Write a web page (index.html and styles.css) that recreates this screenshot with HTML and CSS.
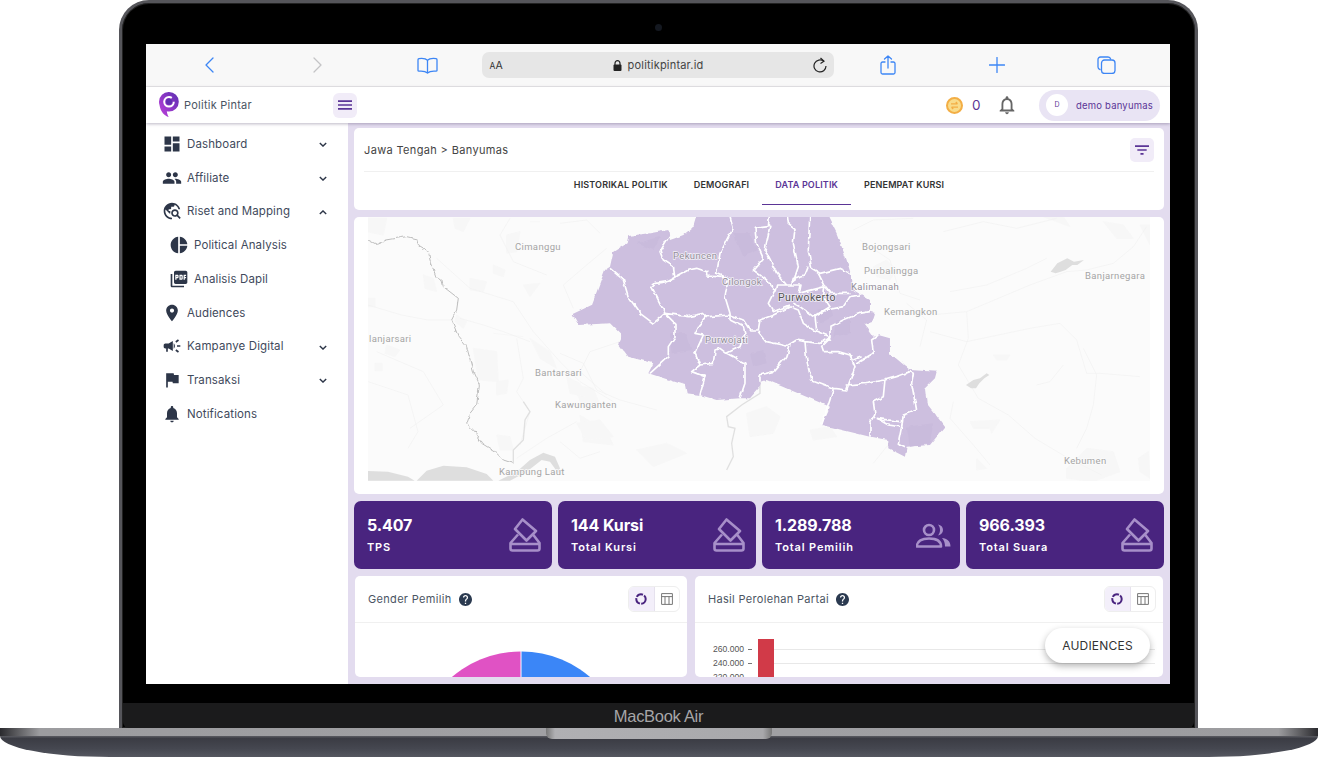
FILE: index.html
```html
<!DOCTYPE html>
<html lang="id">
<head>
<meta charset="utf-8">
<title>Politik Pintar</title>
<link rel="stylesheet" href="styles.css">
</head>
<body>
<div class="laptop">
  <div class="lid">
    <div class="lid-top"><span class="camera"></span></div>
    <div class="screen">
      <div class="safari">
        <span class="slot"><svg width="12" height="18" viewBox="0 0 12 18"><path d="M10 2 3 9l7 7" class="ic-blue"/></svg></span>
        <span class="slot"><svg width="12" height="18" viewBox="0 0 12 18"><path d="m2 2 7 7-7 7" class="ic-grey"/></svg></span>
        <span class="slot"><svg width="21" height="17" viewBox="0 0 21 17"><path d="M10.5 3.2C9 1.6 6 1.2 2 1.6 1.4 1.7 1 2.1 1 2.8v10.6c0 .5.4.8 1 .8 3.5-.3 6.5 0 8.5 1.8M10.5 3.2c1.5-1.6 4.5-2 8.5-1.6.6.1 1 .5 1 1.2v10.6c0 .5-.4.8-1 .8-3.5-.3-6.5 0-8.5 1.8zM10.5 3.2v12.6" class="ic-blue"/></svg></span>
        <div class="urlbar">
          <span class="aa"><small>A</small>A</span>
          <span class="url"><svg width="9" height="11" viewBox="0 0 9 11"><path d="M2 5V3.2a2.5 2.5 0 0 1 5 0V5" fill="none" stroke="#222" stroke-width="1.2"/><rect x=".5" y="4.5" width="8" height="6.5" rx="1" fill="#222"/></svg>politikpintar.id</span>
          <svg width="14" height="16" viewBox="0 0 14 16"><path d="M10.8 4.3A6 6 0 1 0 13 9" fill="none" stroke="#222" stroke-width="1.2"/><path d="M7.5 1 11 4.2 7.5 6.5" fill="none" stroke="#222" stroke-width="1.2"/></svg>
        </div>
        <span class="slot"><svg width="16" height="20" viewBox="0 0 16 20"><path d="M5 7H2.500C1.700 7 1 7.700 1 8.500v9c0 .8.7 1.500 1.500 1.500h11c.8 0 1.500-.7 1.500-1.500v-9c0-.8-.7-1.500-1.500-1.500H11M8 13V1M4.500 4 8 1l3.500 3" class="ic-blue"/></svg></span>
        <span class="slot"><svg width="16" height="16" viewBox="0 0 16 16"><path d="M8 .5v15M.5 8h15" class="ic-blue"/></svg></span>
        <span class="slot"><svg width="19" height="18" viewBox="0 0 19 18"><path d="M3 13.5C1.7 13.2 1 12.4 1 11V3.500C1 2 2 1 3.500 1H11c1.400 0 2.300.7 2.600 2" class="ic-blue"/><rect x="4.500" y="4" width="13.500" height="13.500" rx="3" class="ic-blue"/></svg></span>
      </div>

      <header class="appbar">
        <div class="brand">
          <svg width="20" height="26" viewBox="0 0 20 26"><defs><linearGradient id="lg" x1="0" y1="1" x2="1" y2="0"><stop offset="0" stop-color="#c040dc"/><stop offset="1" stop-color="#5a2fb0"/></linearGradient></defs><path d="M10 0a9.800 9.800 0 0 1 0 19.600c-.8 0-1.500-.1-2.200-.3.2 2.200.9 4 1.900 5.700C5.500 23.800 1.600 20 .5 13 .1 11.900 0 10.900 0 9.800A9.800 9.800 0 0 1 10 0z" fill="url(#lg)"/><circle cx="10" cy="9.800" r="4.800" fill="none" stroke="#fff" stroke-width="2" stroke-dasharray="25 5"/><circle cx="10" cy="9.800" r="3" fill="#5f2fb0"/></svg>
          <span>Politik Pintar</span>
        </div>
        <button class="menu-btn"><svg width="14" height="14" viewBox="3 3 18 18"><path d="M3 18h18v-2H3v2zm0-5h18v-2H3v2zm0-7v2h18V6H3z" fill="#5b3596"/></svg></button>
        <div class="appbar-right">
          <svg class="coin" width="17" height="17" viewBox="0 0 17 17"><circle cx="8.500" cy="8.500" r="7.500" fill="#f9dc8a" stroke="#f3ae45" stroke-width="2"/><path d="M5 6.800h6.500M9.800 5l1.700 1.800M12 10.200H5.500M7.200 12l-1.700-1.800" fill="none" stroke="#f3ae45" stroke-width="1.300"/></svg>
          <span class="balance">0</span>
          <svg class="bell" width="22" height="22" viewBox="0 0 24 24"><path d="M12 22c1.100 0 2-.9 2-2h-4c0 1.100.9 2 2 2zm6-6v-5c0-3.070-1.630-5.640-4.500-6.320V4c0-.83-.67-1.500-1.500-1.500s-1.500.67-1.500 1.500v.68C7.640 5.360 6 7.920 6 11v5l-2 2v1h16v-1l-2-2zm-2 1H8v-6c0-2.480 1.510-4.500 4-4.500s4 2.020 4 4.500v6z" fill="#666"/></svg>
          <div class="user"><span class="avatar">D</span><span class="uname">demo banyumas</span></div>
        </div>
      </header>

      <div class="body">
        <nav class="sidebar">
          <a class="nav"><svg class="ni" viewBox="0 0 24 24"><path d="M3 13h8V3H3v10zm0 8h8v-6H3v6zm10 0h8V11h-8v10zm0-18v6h8V3h-8z"/></svg><span>Dashboard</span><svg class="chev" viewBox="0 0 10 6"><path d="m1 1 4 4 4-4"/></svg></a>
          <a class="nav"><svg class="ni" viewBox="0 0 24 24"><path d="M16 11c1.660 0 2.990-1.340 2.990-3S17.660 5 16 5c-1.660 0-3 1.340-3 3s1.340 3 3 3zm-8 0c1.660 0 2.990-1.340 2.990-3S9.660 5 8 5C6.340 5 5 6.340 5 8s1.340 3 3 3zm0 2c-2.330 0-7 1.170-7 3.500V19h14v-2.500c0-2.330-4.670-3.500-7-3.500zm8 0c-.29 0-.62.02-.97.05 1.160.84 1.970 1.970 1.970 3.450V19h6v-2.500c0-2.330-4.670-3.500-7-3.500z"/></svg><span>Affiliate</span><svg class="chev" viewBox="0 0 10 6"><path d="m1 1 4 4 4-4"/></svg></a>
          <a class="nav"><svg class="ni" viewBox="0 0 24 24"><path d="M19.300 16.900c.4-.7.7-1.500.7-2.400 0-2.500-2-4.500-4.500-4.500S11 12 11 14.500s2 4.500 4.500 4.500c.9 0 1.700-.3 2.400-.7l3.200 3.200 1.400-1.400-3.200-3.200zm-3.800.1c-1.400 0-2.500-1.100-2.500-2.500s1.100-2.500 2.500-2.500 2.500 1.100 2.500 2.500-1.100 2.500-2.500 2.500zM12 20v2C6.480 22 2 17.520 2 12S6.480 2 12 2c4.840 0 8.870 3.440 9.800 8h-2.070c-.64-2.460-2.400-4.470-4.730-5.410V5c0 1.100-.9 2-2 2h-2v2c0 .55-.45 1-1 1H8v2h2v3H9l-4.790-4.790C4.080 10.790 4 11.380 4 12c0 4.410 3.590 8 8 8z"/></svg><span>Riset and Mapping</span><svg class="chev" viewBox="0 0 10 6"><path d="m1 5 4-4 4 4"/></svg></a>
          <a class="nav sub"><svg class="ni" viewBox="0 0 24 24"><path d="M11 2v20c-5.070-.5-9-4.790-9-10s3.930-9.500 9-10zm2.030 0v8.990H22c-.47-4.740-4.240-8.520-8.970-8.990zm0 11.010V22c4.740-.47 8.500-4.250 8.970-8.990h-8.970z"/></svg><span>Political Analysis</span></a>
          <a class="nav sub"><svg class="ni" viewBox="0 0 24 24"><path d="M20 2H8c-1.100 0-2 .9-2 2v12c0 1.100.9 2 2 2h12c1.100 0 2-.9 2-2V4c0-1.100-.9-2-2-2zm-8.500 7.500c0 .83-.67 1.500-1.500 1.500H9v2H7.500V7H10c.83 0 1.500.67 1.500 1.500v1zm5 2c0 .83-.67 1.500-1.500 1.500h-2.500V7H15c.83 0 1.500.67 1.500 1.500v3zm4-3H19v1h1.500V11H19v2h-1.500V7h3v1.500zM9 9.500h1v-1H9v1zM4 6H2v14c0 1.100.9 2 2 2h14v-2H4V6zm10 5.500h1v-3h-1v3z"/></svg><span>Analisis Dapil</span></a>
          <a class="nav"><svg class="ni" viewBox="0 0 24 24"><path d="M12 2C8.130 2 5 5.130 5 9c0 5.250 7 13 7 13s7-7.750 7-13c0-3.870-3.130-7-7-7zm0 9.500c-1.380 0-2.500-1.120-2.500-2.500s1.120-2.500 2.500-2.500 2.500 1.120 2.500 2.500-1.120 2.500-2.500 2.500z"/></svg><span>Audiences</span></a>
          <a class="nav"><svg class="ni" viewBox="0 0 24 24"><path d="M18 11v2h4v-2h-4zm-2 6.610c.96.71 2.210 1.650 3.200 2.390.4-.53.8-1.070 1.200-1.600-.99-.74-2.240-1.680-3.200-2.400-.4.54-.8 1.080-1.200 1.610zM20.400 5.600c-.4-.53-.8-1.070-1.200-1.600-.99.74-2.240 1.680-3.200 2.400.4.53.8 1.070 1.200 1.600.96-.72 2.210-1.650 3.200-2.400zM4 9c-1.100 0-2 .9-2 2v2c0 1.100.9 2 2 2h1v4h2v-4h1l5 3V6L8 9H4zm11.500 3c0-1.330-.58-2.530-1.500-3.350v6.690c.92-.81 1.500-2.010 1.500-3.340z"/></svg><span>Kampanye Digital</span><svg class="chev" viewBox="0 0 10 6"><path d="m1 1 4 4 4-4"/></svg></a>
          <a class="nav"><svg class="ni" viewBox="0 0 24 24"><path d="M14.400 6 14 4H5v17h2v-7h5.600l.4 2h7V6z"/></svg><span>Transaksi</span><svg class="chev" viewBox="0 0 10 6"><path d="m1 1 4 4 4-4"/></svg></a>
          <a class="nav"><svg class="ni" viewBox="0 0 24 24"><path d="M12 22c1.100 0 2-.9 2-2h-4c0 1.100.89 2 2 2zm6-6v-5c0-3.070-1.640-5.640-4.500-6.320V4c0-.83-.67-1.500-1.500-1.500s-1.500.67-1.500 1.500v.68C7.630 5.360 6 7.920 6 11v5l-2 2v1h16v-1l-2-2z"/></svg><span>Notifications</span></a>
        </nav>

        <main class="main">
          <section class="card head-card">
            <div class="crumb-row">
              <span class="crumb">Jawa Tengah &gt; Banyumas</span>
              <button class="filter-btn"><svg width="14" height="14" viewBox="3 3 18 18"><path d="M10 18h4v-2h-4v2zM3 6v2h18V6H3zm3 7h12v-2H6v2z" fill="#5b3596"/></svg></button>
            </div>
            <div class="tabs">
              <a class="tab">HISTORIKAL POLITIK</a>
              <a class="tab">DEMOGRAFI</a>
              <a class="tab active">DATA POLITIK</a>
              <a class="tab">PENEMPAT KURSI</a>
            </div>
          </section>

          <section class="card map-card">
            <svg class="map" width="782" height="264" viewBox="0 0 782 264">
              <defs>
                <filter id="rough" x="-5%" y="-5%" width="110%" height="110%"><feTurbulence type="fractalNoise" baseFrequency=".045" numOctaves="2" seed="4"/><feDisplacementMap in="SourceGraphic" scale="12" xChannelSelector="R" yChannelSelector="G"/></filter>
                <filter id="jag" x="-5%" y="-5%" width="110%" height="110%"><feTurbulence type="fractalNoise" baseFrequency=".16" numOctaves="2" seed="9"/><feDisplacementMap in="SourceGraphic" scale="4" xChannelSelector="R" yChannelSelector="G"/></filter>
              </defs>
              <rect width="782" height="264" fill="#fbfbfb"/>
              <g class="blobs" transform="translate(-8 -2) scale(.3333)">
                <path d="M340 400l70 10 5 90-60-5zM330 190l50 10-10 30-40-5zM400 150l35 15-5 20-30-10zM490 210l50-5-30 40zM510 370l60 40 20 50-50-30zM640 510l60 10 20 50-50 10zM660 600l80 50 20 40-90-10zM410 500l35-5-5 40-30 5zM190 180l30 10 10 40-35-10zM290 300l30 20-10 20-25-20zM410 660l40 5 10 40-40 0zM20 250h25v25H20zM45 445h22v22H45zM80 390l40 15-15 20-30-10zM440 60l40-10-10 60-30 5zM280 10l50 0-20 40-25-10zM20 10l60 0-10 50-50-10z"/>
                <path d="M400 355l90 10M510 20l30 0"/>
              </g>
              <g class="blobs" transform="translate(192 -7) scale(.3333)">
                <path d="M560 610l60-20 40 30-20 50-70 10zM750 660l60-10 20 30-70 10zM230 720l90-20 60 30-100 40zM940 170l40-20 30 30-20 30-40-10zM50 640l70-10 40 50-80 10zM20 500l40 20 20 40-50-10z"/>
              </g>
              <g class="blobs" transform="translate(562 -2) scale(.3333)">
                <path d="M410 760l60-60 80 10 20 60-80 30-80-10zM625 730l30-20 5 80-30-20zM190 420h50l-10 15h-30zM120 620l90-5-25 40-5-15-50 0zM340 5h60l20 30zM520 20l60 10 30 40-50 0zM630 30h30v60zM140 730l30 30-30 5z"/>
              </g>
              <g class="roads" transform="translate(-8 -2) scale(.3333)">
                <path d="M230 130l100 90 130 40 60 90 80 90 60 60 100 60M470 370l20 120-20 40 40 60-30 100M510 380l-80-30-60-20-70-20M24 270l100 30 80 15 70 0M150 640l100-70-60-100-140-60M650 620l-90 50-90 60M740 540l-80-70 30-60 90-30M560 180l-100-40-40-80 30-50M640 280l-30-70 70-60 60-50M24 500l120 40 30 110 -30 50M600 680l60 50 60-20"/>
              </g>
              <g class="roads" transform="translate(562 -2) scale(.3333)">
                <path d="M0 300l110-10 190-80 110-40 60-5 80-20 60-50 40-60M0 350l110 30 190-40 90-15 50 50 30 100 40 0 120 10M110 290l5 80-30 80 60 100 90 50 80 70 100 60 100 50M460 400l40 80-10 90-20 70-30 60M70 560l-10 50 70 80 50 60M320 510l40-10 40-50M40 50l120-30 100 20 120-30M60 230l110-20 120-50 60-30"/>
              </g>
              <g class="roads" transform="translate(192 -7) scale(.3333)">
                <path d="M0 40l80-10 40 40M880 60l60-30 120-5M900 90l90 60 30 100 60 20M1040 280l60 50-20 80M0 430l70 30 40 80 70 30 110 30M940 760l40-50 80-40"/>
              </g>
              <path class="river" transform="translate(-8 -2) scale(.3333)" d="M460 745 460 705 490 675 495 615 510 590 490 560"/>
              <path class="river" transform="translate(192 -7) scale(.3333)" d="M600 515 600 550 545 585 500 620 505 650 525 655 515 700 520 740 500 780"/>
              <g class="water" transform="translate(-8 -2) scale(.3333)">
                <path d="M24 768 84 770 144 785 164 797H24zM170 797 200 767 250 752 320 757 380 777 400 797zM415 797 470 770 510 735 550 713 585 725 600 760 595 775 570 740 545 735 500 770 450 797z"/>
              </g>
              <g class="water" transform="translate(562 -2) scale(.3333)">
                <path d="M362 170l20-25 30-15 20 10 30-5-20 15-15 0-20 15-15 5-15 5zM108 510l22-15 20-5 20-15 8 5-15 10-15 15-10 15-15 0z"/>
              </g>
              <g filter="url(#jag)">
                <path class="border-line" transform="translate(-8 -2) scale(.3333)" d="M24 75 50 88 80 75 140 65 170 72 175 92 205 110 210 135 228 185 245 195 250 215 295 250 290 285 275 315 295 365 320 395 340 470 358 510 350 570 330 595 320 625 345 650 365 685 405 710 430 735 460 745"/>
              </g>
              <g transform="translate(192 -7) scale(.3333)">
                <g filter="url(#rough)">
                  <path class="region" d="M38 312 95 285 135 180 150 170 160 125 200 100 205 78 270 70 325 60 330 90 345 85 370 75 400 50 415 0H795L830 70 860 150 875 200 880 240 930 270 930 305 945 310 935 340 915 345 940 380 955 375 990 385 990 430 1050 480 1130 485 1125 505 1095 535 1100 580 1155 650 1110 705 1040 710 1035 740 985 715 985 690 930 680 785 645 810 590 620 510 605 515 600 530 570 565 540 565 470 570 420 555 380 550 375 525 265 490 280 460 205 440 175 400 185 375 150 340 55 345Z"/>
                  <path class="shade" d="M330 370l50 0 15 50-60 10zM230 100l70-20-20 40zM520 70l50 0 20 50-40 20zM1040 650l80-10-10 60-60 10zM830 330l40 0 0 40-50 10zM770 300l40-10 10 30-40 20zM570 430l40-10 10 40-40 10z"/>
                  <path class="bound" d="M150 175 190 210 205 260 240 310 280 340 315 310M328 78 300 125 310 150 340 170 345 205 320 215 285 220 275 230 290 260 315 310 345 340 345 380 325 410 325 440 270 490M320 215 385 180 410 175 440 185 440 198 470 200 505 205M505 0 520 55 480 130 470 190 505 205 495 260 510 310 510 330M315 310 385 320 430 310 440 320 510 315 550 330 570 360 595 360 600 330 640 315 690 290M440 320 415 350 405 370 430 375 405 430 420 465 395 485 435 500 420 555M510 330 550 350 555 370 540 410 500 430 480 415 465 420 460 460 420 465M500 430 555 460 555 520 540 565M595 365 620 395 680 408 710 390 735 395 780 400 810 380 760 360 730 340 715 300 690 290M690 408 680 440 640 485 600 495 600 515M735 395 740 450 755 510 820 535 860 540 885 470 870 435 835 425 790 425 785 410 810 385M820 535 785 645M860 525 920 520 975 510 1010 500 1050 485 1060 490 1055 520 1070 600 1030 615 1025 650 1015 700 1035 710M975 510 970 560 940 575 945 610 930 640 930 680M950 625 1020 635M950 625 985 645 1020 650M890 460 940 430 935 390 955 375M880 450 905 440M785 410 810 380 810 350 850 330 900 310 930 305M770 360 765 320 800 300 850 290 870 260 900 255M585 55 625 50 630 0M585 55 590 100 610 145 580 180 620 210 645 240 625 280 640 305 690 285M630 50 615 120 650 190 680 225M680 0 685 40 705 55 700 100 715 170 700 215M750 0 745 120 755 175 780 190 840 175 870 190M745 170 735 195 700 205 695 225 650 225 645 245M660 225 720 225 715 250 795 230 790 260 810 290 760 320 720 290 700 280M775 190 795 230 810 250 870 250"/>
                </g>
              </g>
              <text class="lbl" x="147" y="33">Cimanggu</text>
              <text class="lbl halo" x="305" y="42">Pekuncen</text>
              <text class="lbl halo" x="354" y="68">Cilongok</text>
              <text class="lbl big" x="410" y="84">Purwokerto</text>
              <text class="lbl halo" x="337" y="126">Purwojati</text>
              <text class="lbl" x="494" y="33">Bojongsari</text>
              <text class="lbl" x="496" y="57">Purbalingga</text>
              <text class="lbl halo" x="483" y="73">Kalimanah</text>
              <text class="lbl" x="516" y="98">Kemangkon</text>
              <text class="lbl" x="717" y="62">Banjarnegara</text>
              <text class="lbl" x="1" y="125">lanjarsari</text>
              <text class="lbl" x="167" y="159">Bantarsari</text>
              <text class="lbl" x="187" y="191">Kawunganten</text>
              <text class="lbl" x="131" y="258">Kampung Laut</text>
              <text class="lbl" x="696" y="247">Kebumen</text>
            </svg>
          </section>

          <section class="stats">
            <div class="stat"><div><b>5.407</b><span>TPS</span></div><svg class="s-ic" width="32" height="34" viewBox="0 0 32 34"><path d="M13.500 1.500 27 13l-9.500 9.500L6 11zM9 16.500 1.500 25v5.500c0 1.200.8 2 2 2h25c1.200 0 2-.8 2-2V25L24 16.500M1.500 26H30.500"/></svg></div>
            <div class="stat"><div><b>144 Kursi</b><span>Total Kursi</span></div><svg class="s-ic" width="32" height="34" viewBox="0 0 32 34"><path d="M13.500 1.500 27 13l-9.500 9.500L6 11zM9 16.500 1.500 25v5.500c0 1.200.8 2 2 2h25c1.200 0 2-.8 2-2V25L24 16.500M1.500 26H30.500"/></svg></div>
            <div class="stat"><div><b>1.289.788</b><span>Total Pemilih</span></div><svg class="s-ic users" width="35" height="25" viewBox="0 0 35 25"><circle cx="13" cy="7" r="5"/><path d="M1 23.500c0-5.500 5-8 12-8s12 2.500 12 8z"/><path class="fillp" d="M22 1.500c3 .4 5 2.700 5 5.500s-2 5-5 5.500c1.300-1.500 2-3.400 2-5.500s-.7-4-2-5.500zM26 15c5 .6 8.500 3 8.500 8.500H29c0-3.600-1-6.500-3-8.500z"/></svg></div>
            <div class="stat"><div><b>966.393</b><span>Total Suara</span></div><svg class="s-ic" width="32" height="34" viewBox="0 0 32 34"><path d="M13.500 1.500 27 13l-9.500 9.500L6 11zM9 16.500 1.500 25v5.500c0 1.200.8 2 2 2h25c1.200 0 2-.8 2-2V25L24 16.500M1.500 26H30.500"/></svg></div>
          </section>

          <section class="charts">
            <div class="card chart gender">
              <div class="chart-head">
                <span class="chart-title">Gender Pemilih</span>
                <svg class="help" width="13" height="13" viewBox="2 2 20 20"><path d="M12 2C6.480 2 2 6.480 2 12s4.480 10 10 10 10-4.480 10-10S17.520 2 12 2zm1 17h-2v-2h2v2zm2.070-7.750-.9.92C13.450 12.900 13 13.500 13 15h-2v-.5c0-1.100.45-2.100 1.170-2.830l1.240-1.260c.37-.36.59-.86.59-1.410 0-1.100-.9-2-2-2s-2 .9-2 2H8c0-2.210 1.790-4 4-4s4 1.790 4 4c0 .88-.36 1.680-.93 2.250z" fill="#2b3a50"/></svg>
                <div class="toggle"><span class="on"><svg width="12" height="12" viewBox="0 0 12 12"><circle cx="6" cy="6" r="4.700" fill="none" stroke="#49247f" stroke-width="2" stroke-dasharray="7 1.300"/></svg></span><span><svg width="12" height="12" viewBox="0 0 12 12"><path d="M.6.600h10.800v10.800H.6zM.6 3.600h10.800M4 3.600v7.800M8 3.600v7.800" fill="none" stroke="#777" stroke-width="1"/></svg></span></div>
              </div>
              <svg class="pie" width="332" height="54" viewBox="0 0 332 54"><path d="M165.500 28.500A105 105 0 0 0 60.500 133.500H165.500z" fill="#e052c4"/><path d="M166.500 28.500A105 105 0 0 1 271.500 133.500H166.500z" fill="#3b86f7"/></svg>
            </div>
            <div class="card chart parties">
              <div class="chart-head">
                <span class="chart-title">Hasil Perolehan Partai</span>
                <svg class="help" width="13" height="13" viewBox="2 2 20 20"><path d="M12 2C6.480 2 2 6.480 2 12s4.480 10 10 10 10-4.480 10-10S17.520 2 12 2zm1 17h-2v-2h2v2zm2.070-7.750-.9.92C13.450 12.900 13 13.500 13 15h-2v-.5c0-1.100.45-2.100 1.170-2.830l1.240-1.260c.37-.36.59-.86.59-1.410 0-1.100-.9-2-2-2s-2 .9-2 2H8c0-2.210 1.790-4 4-4s4 1.790 4 4c0 .88-.36 1.680-.93 2.250z" fill="#2b3a50"/></svg>
                <div class="toggle"><span class="on"><svg width="12" height="12" viewBox="0 0 12 12"><circle cx="6" cy="6" r="4.700" fill="none" stroke="#49247f" stroke-width="2" stroke-dasharray="7 1.300"/></svg></span><span><svg width="12" height="12" viewBox="0 0 12 12"><path d="M.6.600h10.800v10.800H.6zM.6 3.600h10.800M4 3.600v7.800M8 3.600v7.800" fill="none" stroke="#777" stroke-width="1"/></svg></span></div>
              </div>
              <svg class="bars" width="468" height="54" viewBox="0 0 468 54">
                <path d="M79 26.500H460M79 40.500H460" stroke="#e8e8e8"/>
                <path d="M53 26.500h4M53 40.500h4M53 54.500h4" stroke="#777"/>
                <rect x="63" y="16" width="16" height="40" fill="#d13a48"/>
                <text class="tick" x="49" y="29">260.000</text>
                <text class="tick" x="49" y="43">240.000</text>
                <text class="tick" x="49" y="57">220.000</text>
              </svg>
            </div>
          </section>
        </main>
      </div>
      <button class="fab">AUDIENCES</button>
    </div>
    <div class="chin"></div>
    <div class="hinge-strip">MacBook Air</div>
  </div>
  <div class="base">
    <div class="base-top"><span class="notch"></span></div>
    <div class="base-bottom"></div>
  </div>
</div>
</body>
</html>
```

FILE: styles.css
```css
* { box-sizing: border-box; }
html, body { margin: 0; padding: 0; }
body { width: 1318px; height: 757px; overflow: hidden; background: #fff; font-family: Inter, "Noto Sans", sans-serif; color: #374151; }
a { display: flex; }
button { border: 0; padding: 0; font: inherit; cursor: pointer; }

.laptop { display: flex; flex-direction: column; width: 1318px; height: 757px; }
.lid { width: 1079px; height: 728px; flex: none; margin-left: 119px; padding: 0 24px; background: #000; border: 3px solid #55555a; border-bottom: 0; border-radius: 30px 30px 0 0; display: flex; flex-direction: column; align-items: flex-start; box-shadow: inset 0 0 0 1px #222; }
.lid-top { height: 41px; width: 100%; display: flex; justify-content: center; align-items: center; padding-top: 8px; flex: none; }
.camera { width: 7px; height: 7px; border-radius: 50%; background: #141820; }
.screen { position: relative; width: 1024px; height: 640px; flex: none; display: flex; flex-direction: column; background: #e3dcef; overflow: hidden; }
.chin { height: 19px; flex: none; }
.hinge-strip { height: 25px; margin: 0 -23px; align-self: stretch; flex: none; background: #1b1b1c; color: #a6a6a8; font: 16.500px/26px "Liberation Sans", sans-serif; letter-spacing: -.3px; text-align: center; border-radius: 0 0 6px 6px; }

.base { flex: none; height: 29px; display: flex; flex-direction: column; }
.base-top { height: 8px; flex: none; display: flex; justify-content: center; background: linear-gradient(90deg, #2a2a2e 0, #9c9c9f 3%, #a0a0a3 40%, #a0a0a3 60%, #9c9c9f 97%, #2a2a2e 100%); }
.notch { width: 226px; height: 11px; flex: none; background: linear-gradient(90deg, #777 0, #b0b0b3 4%, #a8a8ab 96%, #777 100%); border-radius: 0 0 6px 6px; position: relative; z-index: 1; }
.base-bottom { height: 21px; flex: none; background: linear-gradient(180deg, #5b5c62 0, #3b3c44 12%, #454750 60%, #555760 100%); border-radius: 0 0 110px 110px / 0 0 21px 21px; }

.safari { height: 43px; flex: none; display: flex; align-items: center; padding-left: 8.500px; background: #f8f8f8; border-bottom: 1px solid #e8e8e8; }
.slot { width: 109px; flex: none; display: flex; justify-content: center; align-items: center; }
.ic-blue { fill: none; stroke: #3d86f5; stroke-width: 1.300; stroke-linecap: round; stroke-linejoin: round; }
.ic-grey { fill: none; stroke: #c4c4c6; stroke-width: 1.300; stroke-linecap: round; stroke-linejoin: round; }
.urlbar { width: 352px; height: 26px; flex: none; display: flex; align-items: center; justify-content: space-between; padding: 0 6px 0 8px; background: #e6e6e6; border-radius: 7px; color: #333; }
.aa { font-size: 10.500px; width: 60px; }
.aa small { font-size: 8.500px; }
.url { display: flex; align-items: center; gap: 6px; font-size: 11px; letter-spacing: .2px; color: #444; margin-right: 47px; }

.appbar { height: 36px; flex: none; display: flex; align-items: center; padding: 0 10px 0 13px; background: #fff; box-shadow: 0 1px 3px rgba(60,50,90,.35); position: relative; z-index: 2; }
.brand { display: flex; align-items: center; gap: 5px; width: 174px; font-size: 11px; letter-spacing: .25px; color: #4b5563; }
.menu-btn { width: 24px; height: 25px; background: #f1ecf8; border-radius: 6px; display: flex; align-items: center; justify-content: center; }
.appbar-right { margin-left: auto; display: flex; align-items: center; }
.coin { flex: none; }
.balance { margin-left: 9px; width: 18px; font-size: 13.500px; color: #5b3596; }
.bell { margin-left: 6px; }
.user { margin-left: 21px; width: 121px; height: 31px; display: flex; align-items: center; padding-left: 7px; background: #e9e4f4; border-radius: 16px; }
.avatar { width: 22px; height: 22px; flex: none; border-radius: 50%; background: #fff; color: #5b3596; font-size: 7px; line-height: 22px; text-align: center; }
.uname { margin-left: 8px; font-size: 9.500px; letter-spacing: .2px; color: #5b3596; white-space: nowrap; }

.body { flex: 1; min-height: 0; display: flex; }
.sidebar { width: 202px; flex: none; background: #fff; padding-top: 4px; }
.nav { height: 33.750px; align-items: center; padding-left: 15.500px; font-size: 11.500px; letter-spacing: .12px; color: #3f4a5c; position: relative; }
.nav span { margin-left: 5.500px; white-space: nowrap; }
.ni { width: 20px; height: 20px; flex: none; fill: #2d3648; }
.sub { padding-left: 22.500px; }
.chev { position: absolute; left: 173px; top: 15px; width: 8px; height: 5px; fill: none; stroke: #2d3648; stroke-width: 1.700; }

.main { flex: 1; min-width: 0; padding: 5px 6px 0; display: flex; flex-direction: column; gap: 7px; overflow: hidden; }
.card { background: #fff; border-radius: 5px; }
.head-card { height: 82px; flex: none; padding: 0 10px; display: flex; flex-direction: column; }
.crumb-row { height: 44px; flex: none; display: flex; justify-content: space-between; align-items: center; border-bottom: 1px solid #f0f0f0; }
.crumb { font-size: 11px; color: #444; letter-spacing: .35px; }
.filter-btn { width: 24px; height: 24px; background: #f1ecf8; border-radius: 5px; display: flex; align-items: center; justify-content: center; }
.tabs { flex: 1; display: flex; justify-content: center; }
.tab { height: 33px; padding: 0 13px 8px; align-items: center; font-size: 9px; font-weight: 600; letter-spacing: .15px; color: #333; white-space: nowrap; border-bottom: 1.500px solid transparent; }
.tab.active { color: #5b3596; border-bottom-color: #5b3596; }

.map-card { height: 277px; flex: none; padding: 0 14px; }
.map { display: block; }
.blobs { fill: #f7f7f7; stroke: #f7f7f7; stroke-width: 3; filter: blur(2px); }
.roads { fill: none; stroke: #f2f2f2; stroke-width: 2; }
.border-line { fill: none; stroke: #adadad; stroke-width: 2.400; }
.river { fill: none; stroke: #e0e0e0; stroke-width: 4; }
.water { fill: #dedede; }
.region { fill: #cdbfdf; }
.shade { fill: #c9bbdc; }
.bound { fill: none; stroke: #fff; stroke-width: 5; stroke-linejoin: round; }
.lbl { font: 9.500px Roboto, sans-serif; fill: #a5a5a5; letter-spacing: .35px; paint-order: stroke; stroke: #fbfbfb; stroke-width: 1.500px; }
.lbl.halo { fill: #928d99; stroke: rgba(255,255,255,.75); }
.lbl.big { font-size: 10.500px; fill: #555; stroke: rgba(255,255,255,.7); letter-spacing: .4px; }

.stats { flex: none; height: 68px; display: flex; gap: 6px; }
.stat { flex: 1; min-width: 0; display: flex; align-items: center; justify-content: space-between; padding: 0 11px 0 13px; background: #49247f; border-radius: 7px; color: #fff; }
.stat > div { padding-bottom: 2px; }
.stat b { display: block; font-size: 16px; line-height: 20px; font-weight: 700; letter-spacing: -.1px; }
.stat span { display: block; margin-top: 5px; font-size: 11px; line-height: 14px; font-weight: 600; letter-spacing: .85px; }
.s-ic { fill: none; stroke: #a78fc9; stroke-width: 2.600; stroke-linejoin: round; }
.users { margin-right: -2px; }
.users .fillp { fill: #a78fc9; stroke: none; }

.charts { flex: none; height: 101px; display: flex; gap: 8px; padding: 0 1px; }
.chart { border-radius: 5px; overflow: hidden; }
.gender { width: 332px; flex: none; }
.parties { width: 468px; flex: none; }
.chart-head { height: 47px; display: flex; align-items: center; padding: 0 7px 0 13px; border-bottom: 1px solid #f0f0f0; }
.chart-title { font-size: 11px; letter-spacing: .32px; color: #4b5563; }
.help { margin-left: 7px; }
.toggle { margin-left: auto; display: flex; width: 52px; height: 26px; border: 1px solid #eee; border-radius: 6px; overflow: hidden; }
.toggle span { flex: 1; display: flex; align-items: center; justify-content: center; }
.toggle .on { background: #f3effa; border-right: 1px solid #e6e2ee; }
.pie, .bars { display: block; }
.tick { font: 8.600px "Liberation Sans", sans-serif; fill: #555; text-anchor: end; }

.fab { position: absolute; right: 20px; bottom: 21px; width: 105px; height: 35px; border-radius: 18px; background: #fff; color: #333; font-size: 12px; letter-spacing: .2px; box-shadow: 0 3px 7px rgba(0,0,0,.3); z-index: 3; }
```
